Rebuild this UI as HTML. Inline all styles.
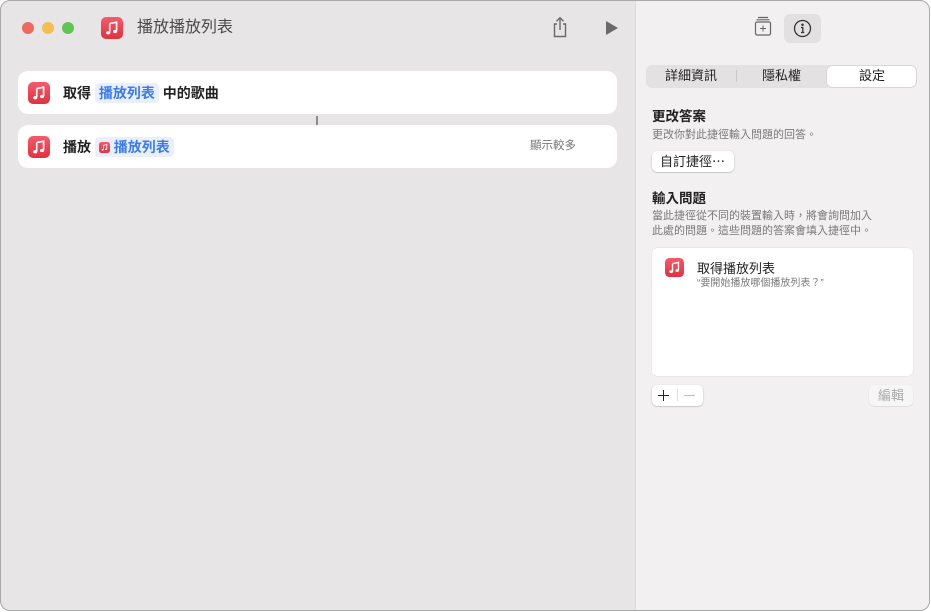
<!DOCTYPE html>
<html><head><meta charset="utf-8"><style>
*{box-sizing:border-box;margin:0;padding:0}
body{width:931px;height:612px;background:#fff;font-family:"Liberation Sans","Noto Sans CJK TC",sans-serif;position:relative;overflow:hidden}
.win{position:absolute;left:0;top:0;width:930px;height:611px;border-radius:10px;overflow:hidden;background:#e7e5e6}
.frame{position:absolute;left:0;top:0;width:930px;height:611px;border:1px solid #a9a9a9;border-radius:10px;pointer-events:none}
.right{position:absolute;left:635px;top:0;width:295px;height:611px;background:#f2f0f1;border-left:1px solid #dcdadb}
.abs{position:absolute}
.dot{position:absolute;top:22px;width:12px;height:12px;border-radius:50%}
.card{position:absolute;left:18px;width:599px;height:43px;background:#fff;border-radius:10px}
.t{position:absolute;white-space:nowrap;line-height:1}
.tok{background:#eaf0fb;color:#3a7af0;border-radius:4px;padding:2px 4px}
</style></head><body>
<svg width="0" height="0" style="position:absolute"><defs>
<linearGradient id="g" x1="0" y1="0" x2="0" y2="1"><stop offset="0" stop-color="#f85a6c"/><stop offset="1" stop-color="#e0313f"/></linearGradient>
<symbol id="m" viewBox="0 0 24 24"><rect width="24" height="24" rx="5.5" fill="url(#g)"/><path d="M9.5 7.2 L17 5.6 V15.6" fill="none" stroke="#fff" stroke-width="1.8"/><path d="M9.5 7.2 V17" stroke="#fff" stroke-width="1.8"/><ellipse cx="7.8" cy="17.2" rx="2.2" ry="1.8" fill="#fff"/><ellipse cx="15.3" cy="15.8" rx="2.2" ry="1.8" fill="#fff"/></symbol>
</defs></svg>
<div class="win">
<div class="dot" style="left:22px;background:#ee6a5e"></div>
<div class="dot" style="left:42px;background:#f5bf4f"></div>
<div class="dot" style="left:62px;background:#61c554"></div>
<svg class="abs" style="left:101px;top:17px" width="22" height="22"><use href="#m"/></svg>
<div class="t" style="left:137px;top:20px;font-size:16px;color:#4a4a4a">播放播放列表</div>
<svg class="abs" style="left:551px;top:16px" width="18" height="22" viewBox="0 0 18 22" fill="none" stroke="#6a6a6a" stroke-width="1.4"><path d="M6 8H3.5V20.5H14.5V8H12"/><path d="M9 14V2M5.5 5.3L9 1.8 12.5 5.3"/></svg>
<svg class="abs" style="left:605px;top:20px" width="14" height="16"><path d="M1 1L13 8 1 15Z" fill="#6a6a6a"/></svg>
<div class="card" style="top:71px"></div>
<svg class="abs" style="left:28px;top:82px" width="22" height="22"><use href="#m"/></svg>
<div class="t" style="left:63px;top:86px;font-size:14px;font-weight:bold;color:#222">取得 <span class="tok">播放列表</span> 中的歌曲</div>
<div class="abs" style="left:316px;top:116px;width:2px;height:9px;background:#8d8d8d"></div>
<div class="card" style="top:125px"></div>
<svg class="abs" style="left:28px;top:136px" width="22" height="22"><use href="#m"/></svg>
<div class="t" style="left:63px;top:140px;font-size:14px;font-weight:bold;color:#222">播放 <span class="tok"><svg width="11" height="11" style="vertical-align:-1px"><use href="#m"/></svg> 播放列表</span></div>
<div class="t" style="left:530px;top:141px;font-size:11.5px;color:#777">顯示較多</div>

<div class="right">
<svg class="abs" style="left:118px;top:16px" width="18" height="21" viewBox="0 0 18 21" fill="none" stroke="#666" stroke-width="1.2"><path d="M4 1.5H14M2.5 3.8H15.5"/><rect x="1.5" y="6" width="15" height="13" rx="1.5"/><path d="M9 9.5V15.5M6 12.5H12" stroke-width="1"/></svg>
<div class="abs" style="left:148px;top:14px;width:37px;height:29px;background:#e2e0e1;border-radius:6px"></div>
<svg class="abs" style="left:157px;top:19px" width="19" height="19" viewBox="0 0 19 19" fill="none" stroke="#333" stroke-width="1.3"><circle cx="9.5" cy="9.5" r="8"/><circle cx="9.5" cy="5.7" r=".6" fill="#333"/><path d="M8 8.5H9.8V13.5M8 13.5H11.2"/></svg>
<div class="abs" style="left:10px;top:65px;width:271px;height:23px;background:#e3e1e2;border-radius:6px"></div>
<div class="abs" style="left:100px;top:70px;width:1px;height:12px;background:#c9c7c8"></div>
<div class="abs" style="left:191px;top:66px;width:89px;height:21px;background:#fff;border-radius:5px;box-shadow:0 0 1px rgba(0,0,0,.3)"></div>
<div class="t" style="left:29px;top:69px;font-size:13px;color:#222">詳細資訊</div>
<div class="t" style="left:126px;top:69px;font-size:13px;color:#222">隱私權</div>
<div class="t" style="left:223px;top:69px;font-size:13px;color:#222">設定</div>
<div class="t" style="left:16px;top:110px;font-size:13.5px;font-weight:bold;color:#222">更改答案</div>
<div class="t" style="left:16px;top:130px;font-size:11px;color:#7a7a7a">更改你對此捷徑輸入問題的回答。</div>
<div class="abs" style="left:16px;top:151px;width:82px;height:21px;background:#fff;border-radius:5px;box-shadow:0 0.5px 1.5px rgba(0,0,0,.3)"></div>
<div class="t" style="left:24px;top:155px;font-size:13px;color:#222">自訂捷徑⋯</div>
<div class="t" style="left:16px;top:192px;font-size:13.5px;font-weight:bold;color:#222">輸入問題</div>
<div class="t" style="left:16px;top:209px;font-size:11px;line-height:15px;color:#7a7a7a">當此捷徑從不同的裝置輸入時，將會詢問加入<br>此處的問題。這些問題的答案會填入捷徑中。</div>
<div class="abs" style="left:16px;top:248px;width:261px;height:128px;background:#fff;border-radius:6px;box-shadow:0 0 1px rgba(0,0,0,.2)"></div>
<svg class="abs" style="left:29px;top:258px" width="19" height="19"><use href="#m"/></svg>
<div class="t" style="left:61px;top:262px;font-size:13px;color:#222">取得播放列表</div>
<div class="t" style="left:61px;top:279px;font-size:10px;color:#7a7a7a">“要開始播放哪個播放列表？”</div>
<div class="abs" style="left:16px;top:385px;width:51px;height:21px;background:#fff;border-radius:5px;box-shadow:0 0.5px 1.5px rgba(0,0,0,.3)"></div>
<div class="abs" style="left:22px;top:395px;width:11px;height:1.4px;background:#222"></div>
<div class="abs" style="left:27px;top:390px;width:1.4px;height:11px;background:#222"></div>
<div class="abs" style="left:41px;top:389px;width:1px;height:12px;background:#ddd"></div>
<div class="abs" style="left:48px;top:395px;width:11px;height:1px;background:#bbb"></div>
<div class="abs" style="left:233px;top:385px;width:44px;height:21px;background:#f7f6f6;border-radius:5px;box-shadow:0 0.5px 1px rgba(0,0,0,.15)"></div>
<div class="t" style="left:242px;top:389px;font-size:13px;color:#aaa">編輯</div>
</div>
</div>
<div class="frame"></div>
</body></html>
